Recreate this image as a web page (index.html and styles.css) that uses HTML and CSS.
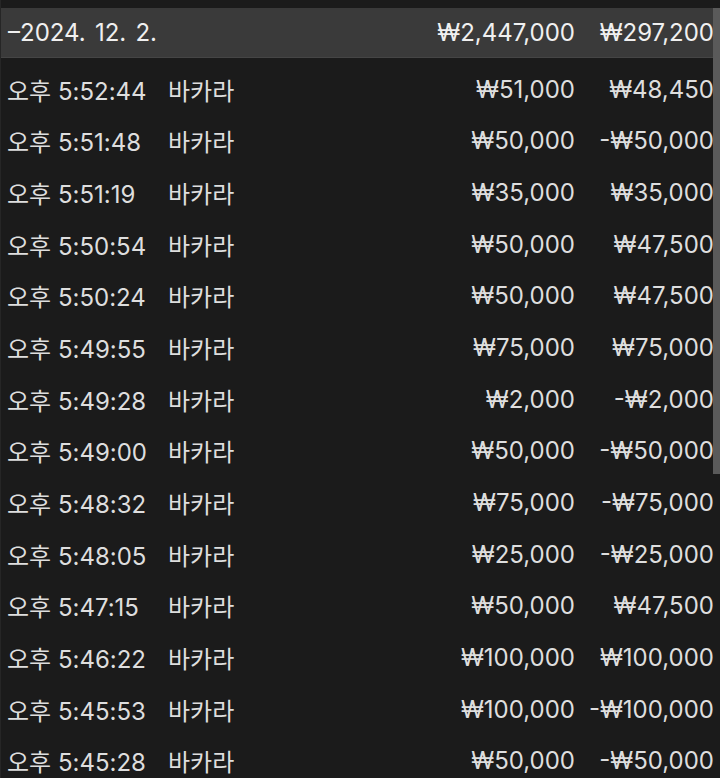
FILE: index.html
```html
<!DOCTYPE html>
<html lang="ko">
<head>
<meta charset="utf-8">
<link rel="stylesheet" href="styles.css">
</head>
<body>
<div class="screen">
  <div class="head">
    <span class="date">–2024. 12. 2.</span>
    <span class="amt">₩2,447,000</span>
    <span class="pl">₩297,200</span>
  </div>
  <div class="list">
    <div class="row"><span class="time">오후 5:52:44</span><span class="game">바카라</span><span class="amt">₩51,000</span><span class="pl">₩48,450</span></div>
    <div class="row"><span class="time">오후 5:51:48</span><span class="game">바카라</span><span class="amt">₩50,000</span><span class="pl">-₩50,000</span></div>
    <div class="row"><span class="time">오후 5:51:19</span><span class="game">바카라</span><span class="amt">₩35,000</span><span class="pl">₩35,000</span></div>
    <div class="row"><span class="time">오후 5:50:54</span><span class="game">바카라</span><span class="amt">₩50,000</span><span class="pl">₩47,500</span></div>
    <div class="row"><span class="time">오후 5:50:24</span><span class="game">바카라</span><span class="amt">₩50,000</span><span class="pl">₩47,500</span></div>
    <div class="row"><span class="time">오후 5:49:55</span><span class="game">바카라</span><span class="amt">₩75,000</span><span class="pl">₩75,000</span></div>
    <div class="row"><span class="time">오후 5:49:28</span><span class="game">바카라</span><span class="amt">₩2,000</span><span class="pl">-₩2,000</span></div>
    <div class="row"><span class="time">오후 5:49:00</span><span class="game">바카라</span><span class="amt">₩50,000</span><span class="pl">-₩50,000</span></div>
    <div class="row"><span class="time">오후 5:48:32</span><span class="game">바카라</span><span class="amt">₩75,000</span><span class="pl">-₩75,000</span></div>
    <div class="row"><span class="time">오후 5:48:05</span><span class="game">바카라</span><span class="amt">₩25,000</span><span class="pl">-₩25,000</span></div>
    <div class="row"><span class="time">오후 5:47:15</span><span class="game">바카라</span><span class="amt">₩50,000</span><span class="pl">₩47,500</span></div>
    <div class="row"><span class="time">오후 5:46:22</span><span class="game">바카라</span><span class="amt">₩100,000</span><span class="pl">₩100,000</span></div>
    <div class="row"><span class="time">오후 5:45:53</span><span class="game">바카라</span><span class="amt">₩100,000</span><span class="pl">-₩100,000</span></div>
    <div class="row"><span class="time">오후 5:45:28</span><span class="game">바카라</span><span class="amt">₩50,000</span><span class="pl">-₩50,000</span></div>
  </div>
  <div class="scrollbar"></div>
</div>
</body>
</html>
```
FILE: styles.css
```css
* { box-sizing: border-box; }
html, body {
  margin: 0;
  padding: 0;
  background: #1b1b1b;
}
body {
  font-family: Inter, "Noto Sans CJK KR", sans-serif;
  font-size: 24px;
  color: #dedede;
}
.screen {
  position: relative;
  width: 720px;
  height: 778px;
  overflow: hidden;
  padding-top: 8px;
  border-left: 1px solid #262626;
}
.head {
  display: grid;
  grid-template-columns: 1fr auto 139px;
  align-items: center;
  height: 50px;
  padding: 0 6px 0 7px;
  background: #3a3a3a;
  border-bottom: 1px solid #454545;
  color: #f0f0f0;
}
.date {
  word-spacing: 2.5px;
}
.list {
  padding-top: 5.5px;
}
.row {
  display: grid;
  grid-template-columns: 161px 1fr auto 139px;
  align-items: center;
  height: 51.65px;
  padding: 0 6px 0 6px;
}
.game {
  font-family: "Noto Sans CJK KR", sans-serif;
  font-weight: 400;
}
.amt, .pl {
  text-align: right;
}
.scrollbar {
  position: absolute;
  top: 8px;
  right: 0;
  width: 7px;
  height: 466px;
  background: #5a5a5a;
}
```
